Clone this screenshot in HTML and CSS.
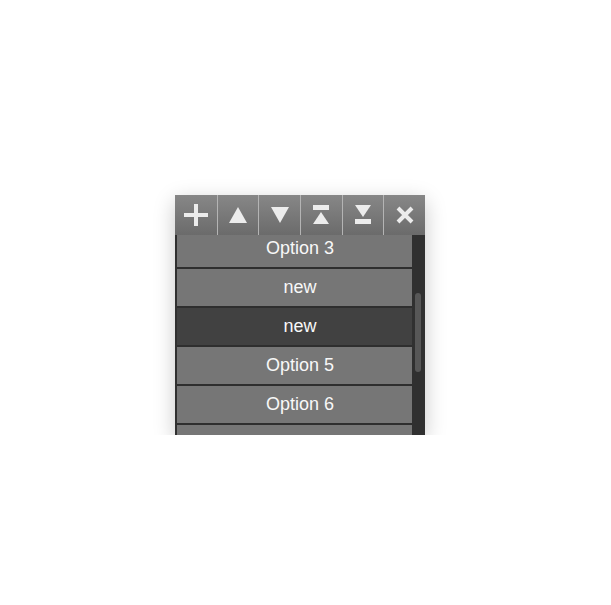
FILE: index.html
```html
<!DOCTYPE html>
<html>
<head>
<meta charset="utf-8">
<link rel="stylesheet" href="styles.css">
</head>
<body>
<div class="panel">
  <div class="toolbar">
    <div class="btn"><svg width="24" height="22" viewBox="0 0 24 22"><rect x="0" y="9" width="24" height="4" fill="#ececec"/><rect x="10" y="0" width="4" height="22" fill="#ececec"/></svg></div>
    <div class="btn"><svg width="18" height="16" viewBox="0 0 18 16"><polygon points="9,0 18,16 0,16" fill="#ececec"/></svg></div>
    <div class="btn"><svg width="18" height="16" viewBox="0 0 18 16"><polygon points="0,0 18,0 9,16" fill="#ececec"/></svg></div>
    <div class="btn"><svg width="16" height="20" viewBox="0 0 16 20"><rect x="0" y="0" width="16" height="5" fill="#ececec"/><polygon points="8,7 16,19 0,19" fill="#ececec"/></svg></div>
    <div class="btn"><svg width="16" height="20" viewBox="0 0 16 20"><polygon points="0,0 16,0 8,12" fill="#ececec"/><rect x="0" y="14" width="16" height="5" fill="#ececec"/></svg></div>
    <div class="btn"><svg width="18" height="18" viewBox="0 0 18 18"><path d="M2 2 L16 16 M16 2 L2 16" stroke="#ececec" stroke-width="4"/></svg></div>
  </div>
  <div class="list">
    <div class="rows">
      <div class="row">Option 3</div>
      <div class="row">new</div>
      <div class="row selected">new</div>
      <div class="row">Option 5</div>
      <div class="row">Option 6</div>
      <div class="row"></div>
    </div>
    <div class="scrollbar"><div class="thumb"></div></div>
  </div>
</div>
</body>
</html>
```
FILE: styles.css
```css
html, body {
  margin: 0;
  padding: 0;
  background: #ffffff;
}
body {
  padding: 195px 0 0 175px;
  font-family: "Liberation Sans", Arial, sans-serif;
}
.panel {
  width: 250px;
  box-shadow: 0 6px 20px rgba(0, 0, 0, 0.22);
}
.toolbar {
  display: grid;
  grid-template-columns: repeat(6, 1fr);
  height: 40px;
  background: linear-gradient(#878787, #6b6b6b);
}
.btn {
  display: flex;
  align-items: center;
  justify-content: center;
  border-left: 1px solid #b4b4b4;
}
.btn:first-child {
  border-left: none;
}
.list {
  position: relative;
  height: 200px;
  overflow: hidden;
  background: #303030;
}
.rows {
  margin-top: -5px;
  padding: 0 2px;
}
.row {
  height: 37px;
  border-bottom: 2px solid #2e2e2e;
  background: #767676;
  color: #f8f8f8;
  font-size: 18px;
  display: flex;
  align-items: center;
  justify-content: center;
}
.row.selected {
  background: #414141;
}
.scrollbar {
  position: absolute;
  top: 0;
  right: 0;
  width: 13px;
  height: 200px;
  background: #303030;
}
.thumb {
  position: absolute;
  top: 58px;
  left: 3px;
  width: 6px;
  height: 79px;
  border-radius: 3px;
  background: #575757;
}
```
